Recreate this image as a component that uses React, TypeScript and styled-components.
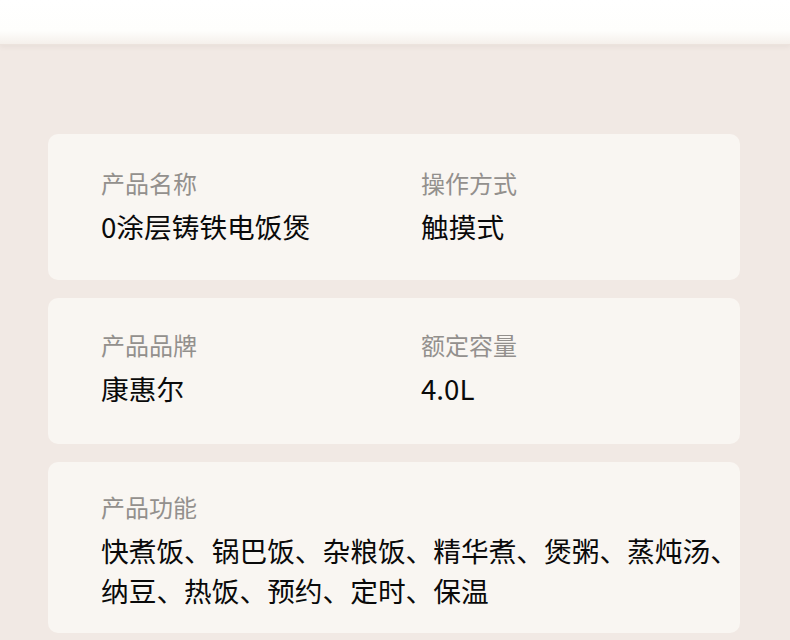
import styled, { createGlobalStyle } from 'styled-components';

const GlobalStyle = createGlobalStyle`
    html, body {
        margin: 0;
        padding: 0;
        background: #f1e9e4;
    }
    body {
        font-family: "Noto Sans CJK SC", "Noto Sans", sans-serif;
    }
`;

const Page = styled.div`
    width: 790px;
    height: 640px;
    overflow: hidden;
    background: #f1e9e4;
    display: flex;
    flex-direction: column;
`;

const TopBar = styled.div`
    height: 44px;
    flex-shrink: 0;
    background: linear-gradient(to bottom, #ffffff 0%, #fefefc 70%, #f5f0eb 100%);
    box-shadow: 0 2px 5px rgba(120, 90, 70, 0.07);
    border-bottom: 1px solid #ece3dd;
`;

const CardList = styled.div`
    display: flex;
    flex-direction: column;
    gap: 18px;
    padding: 89px 50px 0 48px;
`;

const Card = styled.div<{ pt: number; pb: number }>`
    background: #f9f6f2;
    border-radius: 10px;
    padding: ${p => p.pt}px 0 ${p => p.pb}px 53px;
    display: grid;
    grid-template-columns: 320px 1fr;
`;

const Field = styled.div<{ wide?: boolean }>`
    display: flex;
    flex-direction: column;
    grid-column: ${p => (p.wide ? '1 / -1' : 'auto')};
`;

const Label = styled.div`
    font-size: 24px;
    line-height: 34px;
    color: #93908d;
    margin-bottom: 6px;
`;

const Value = styled.div`
    font-size: 27.7px;
    line-height: 40px;
    font-weight: 400;
    color: #0a0a0a;
    white-space: nowrap;
`;

type Item = { label: string; value: string[] };

const rows: { items: Item[]; pt: number; pb: number; wide?: boolean }[] = [
    {
        pt: 32,
        pb: 34,
        items: [
            { label: '产品名称', value: ['0涂层铸铁电饭煲'] },
            { label: '操作方式', value: ['触摸式'] },
        ],
    },
    {
        pt: 30,
        pb: 36,
        items: [
            { label: '产品品牌', value: ['康惠尔'] },
            { label: '额定容量', value: ['4.0L'] },
        ],
    },
    {
        pt: 28,
        pb: 23,
        wide: true,
        items: [
            {
                label: '产品功能',
                value: ['快煮饭、锅巴饭、杂粮饭、精华煮、煲粥、蒸炖汤、', '纳豆、热饭、预约、定时、保温'],
            },
        ],
    },
];

export default function App() {
    return (
        <Page>
            <GlobalStyle />
            <TopBar />
            <CardList>
                {rows.map((row, i) => (
                    <Card key={i} pt={row.pt} pb={row.pb}>
                        {row.items.map(item => (
                            <Field key={item.label} wide={row.wide}>
                                <Label>{item.label}</Label>
                                {item.value.map(line => (
                                    <Value key={line}>{line}</Value>
                                ))}
                            </Field>
                        ))}
                    </Card>
                ))}
            </CardList>
        </Page>
    );
}
